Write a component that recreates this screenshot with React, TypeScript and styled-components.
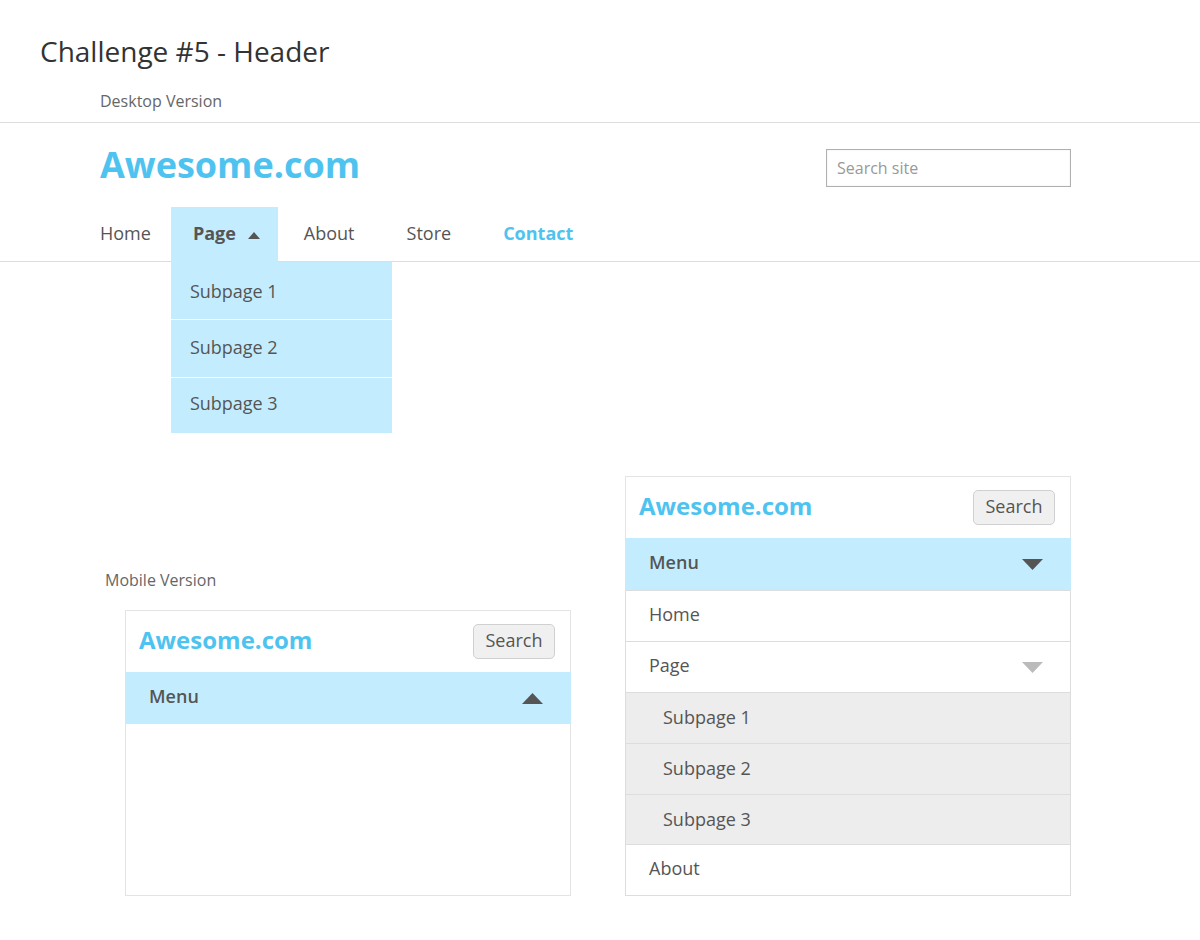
import React, { useState } from "react";
import styled, { createGlobalStyle, css } from "styled-components";

const colors = {
  brand: "#4fc3f0",
  highlight: "#c3edff",
  text: "#555555",
  heading: "#333333",
  label: "#666666",
  line: "#dddddd",
  frame: "#e4e4e4",
  muted: "#bbbbbb",
  submenu: "#ededed",
};

const GlobalStyle = createGlobalStyle`
  *, *::before, *::after { box-sizing: border-box; }
  body {
    margin: 0;
    background: #ffffff;
    color: ${colors.text};
    font-family: "Open Sans", sans-serif;
    font-size: 18px;
    line-height: 24px;
  }
  button, input { font: inherit; color: inherit; }
  a { color: inherit; text-decoration: none; }
  ul { margin: 0; padding: 0; list-style: none; }
`;

const Page = styled.main`
  padding: 32px 0 44px;
`;

const Title = styled.h1`
  margin: 0 40px 20px;
  color: ${colors.heading};
  font-size: 28px;
  font-weight: 400;
  line-height: 38px;
`;

const VersionLabel = styled.h2`
  margin: 0;
  color: ${colors.label};
  font-size: 16px;
  font-weight: 400;
  line-height: 22px;
`;

const DesktopLabel = styled(VersionLabel)`
  padding: 0 129px 10px 100px;
`;

const MobileLabel = styled(VersionLabel)`
  margin: 0 0 19px -20px;
`;

const DesktopHeader = styled.header`
  padding: 20px 129px 0 100px;
  border-top: 1px solid ${colors.line};
  border-bottom: 1px solid ${colors.line};
`;

const Masthead = styled.div`
  display: flex;
  align-items: flex-end;
  justify-content: space-between;
`;

const Logo = styled.a<{ $large?: boolean }>`
  color: ${colors.brand};
  font-weight: 700;
  ${(p) =>
    p.$large
      ? css`
          font-size: 36px;
          line-height: 44px;
        `
      : css`
          padding-bottom: 3px;
          font-size: 24px;
          line-height: 32px;
        `}
`;

const SearchField = styled.input`
  width: 245px;
  height: 38px;
  padding: 0 10px;
  border: 1px solid #b0b0b0;
  border-radius: 0;
  background: #ffffff;
  box-shadow: inset 0 0 2px rgba(0, 0, 0, 0.1);
  font-size: 16px;
  &::placeholder {
    color: #999999;
    opacity: 1;
  }
`;

const NavList = styled.ul`
  display: flex;
  margin-top: 20px;
`;

const NavItem = styled.li`
  position: relative;
`;

const NavLink = styled.a<{ $first?: boolean; $accent?: boolean }>`
  display: flex;
  align-items: center;
  height: 54px;
  padding: ${(p) => (p.$first ? "0 20px 2px 0" : "0 26px 2px")};
  ${(p) =>
    p.$accent &&
    css`
      color: ${colors.brand};
      font-weight: 700;
    `}
`;

const NavTab = styled.button`
  display: flex;
  align-items: center;
  gap: 12px;
  height: 55px;
  margin-bottom: -1px;
  padding: 2px 18px 0 22px;
  border: 0;
  background: ${colors.highlight};
  font-weight: 700;
  cursor: pointer;
`;

const TabLabel = styled.span`
  padding-bottom: 6px;
`;

const Dropdown = styled.ul`
  position: absolute;
  top: 100%;
  left: 0;
  width: 221px;
  margin-top: 1px;
  background: ${colors.highlight};
`;

const DropdownItem = styled.li`
  padding: 15px 19px 18px;
  & + & {
    border-top: 1px solid #ffffff;
  }
  &:first-child {
    padding: 17px 19px 16px;
  }
  &:last-child {
    padding: 13px 19px 18px;
  }
`;

const MobileSection = styled.section`
  display: grid;
  grid-template-columns: 1fr 1fr;
  align-items: end;
  gap: 54px;
  margin-top: 214px;
  padding: 0 129px 0 125px;
`;

const Card = styled.div`
  min-height: 286px;
  border: 1px solid ${colors.frame};
`;

const CardHead = styled.div`
  display: flex;
  align-items: center;
  justify-content: space-between;
  height: 61px;
  padding: 0 15px 0 13px;
`;

const SearchButton = styled.button`
  width: 82px;
  height: 35px;
  padding: 0 0 3px;
  border: 1px solid #d0d0d0;
  border-radius: 5px;
  background: #f0f0f0;
  cursor: pointer;
`;

const RowLabel = styled.span`
  padding-bottom: 4px;
`;

const MenuBar = styled.button`
  display: flex;
  align-items: center;
  justify-content: space-between;
  width: calc(100% + 2px);
  height: 52px;
  margin: 0 -1px;
  padding: 0 28px 0 24px;
  border: 0;
  background: ${colors.highlight};
  font-weight: 600;
  cursor: pointer;
`;

const MenuList = styled.ul`
  margin: 0 -1px -1px;
  border: 1px solid ${colors.line};
`;

const MenuRow = styled.a`
  display: flex;
  align-items: center;
  justify-content: space-between;
  height: 50px;
  padding: 0 27px 0 23px;
`;

const MenuItem = styled.li`
  & + & {
    border-top: 1px solid ${colors.line};
  }
`;

const SubmenuItem = styled.li`
  display: flex;
  align-items: center;
  height: 51px;
  padding: 0 27px 3px 37px;
  border-top: 1px solid ${colors.line};
  background: ${colors.submenu};
  &:last-child {
    height: 50px;
    padding-bottom: 1px;
  }
`;

const ArrowIcon = styled.svg`
  display: block;
  flex: none;
`;

interface ArrowProps {
  up?: boolean;
  small?: boolean;
  color?: string;
}

function Arrow({ up, small, color = colors.text }: ArrowProps) {
  const w = small ? 12 : 21;
  const h = small ? 7 : 11;
  const points = up ? `0,${h} ${w / 2},0 ${w},${h}` : `0,0 ${w},0 ${w / 2},${h}`;
  return (
    <ArrowIcon width={w} height={h} viewBox={`0 0 ${w} ${h}`} aria-hidden="true">
      <polygon points={points} fill={color} />
    </ArrowIcon>
  );
}

const subpages = ["Subpage 1", "Subpage 2", "Subpage 3"];

function DesktopNav() {
  const [open, setOpen] = useState(true);
  return (
    <nav>
      <NavList>
        <NavItem>
          <NavLink href="#home" $first>Home</NavLink>
        </NavItem>
        <NavItem>
          <NavTab type="button" aria-expanded={open} onClick={() => setOpen(!open)}>
            <TabLabel>Page</TabLabel>
            <Arrow up={open} small />
          </NavTab>
          {open && (
            <Dropdown>
              {subpages.map((name) => (
                <DropdownItem key={name}>
                  <a href="#subpage">{name}</a>
                </DropdownItem>
              ))}
            </Dropdown>
          )}
        </NavItem>
        <NavItem>
          <NavLink href="#about">About</NavLink>
        </NavItem>
        <NavItem>
          <NavLink href="#store">Store</NavLink>
        </NavItem>
        <NavItem>
          <NavLink href="#contact" $accent>Contact</NavLink>
        </NavItem>
      </NavList>
    </nav>
  );
}

function MobileHeader({ defaultOpen = false }: { defaultOpen?: boolean }) {
  const [open, setOpen] = useState(defaultOpen);
  return (
    <Card>
      <CardHead>
        <Logo href="#home">Awesome.com</Logo>
        <SearchButton type="button">Search</SearchButton>
      </CardHead>
      <MenuBar type="button" aria-expanded={open} onClick={() => setOpen(!open)}>
        <RowLabel>Menu</RowLabel>
        <Arrow up={!open} />
      </MenuBar>
      {open && (
        <MenuList>
          <MenuItem>
            <MenuRow href="#home">
              <RowLabel>Home</RowLabel>
            </MenuRow>
          </MenuItem>
          <MenuItem>
            <MenuRow href="#page">
              <RowLabel>Page</RowLabel>
              <Arrow color={colors.muted} />
            </MenuRow>
            <ul>
              {subpages.map((name) => (
                <SubmenuItem key={name}>
                  <a href="#subpage">{name}</a>
                </SubmenuItem>
              ))}
            </ul>
          </MenuItem>
          <MenuItem>
            <MenuRow href="#about">
              <RowLabel>About</RowLabel>
            </MenuRow>
          </MenuItem>
        </MenuList>
      )}
    </Card>
  );
}

export default function App() {
  return (
    <>
      <GlobalStyle />
      <Page>
        <Title>Challenge #5 - Header</Title>
        <DesktopLabel>Desktop Version</DesktopLabel>
        <DesktopHeader>
          <Masthead>
            <Logo href="#home" $large>Awesome.com</Logo>
            <SearchField type="search" placeholder="Search site" aria-label="Search site" />
          </Masthead>
          <DesktopNav />
        </DesktopHeader>
        <MobileSection>
          <div>
            <MobileLabel>Mobile Version</MobileLabel>
            <MobileHeader />
          </div>
          <MobileHeader defaultOpen />
        </MobileSection>
      </Page>
    </>
  );
}
